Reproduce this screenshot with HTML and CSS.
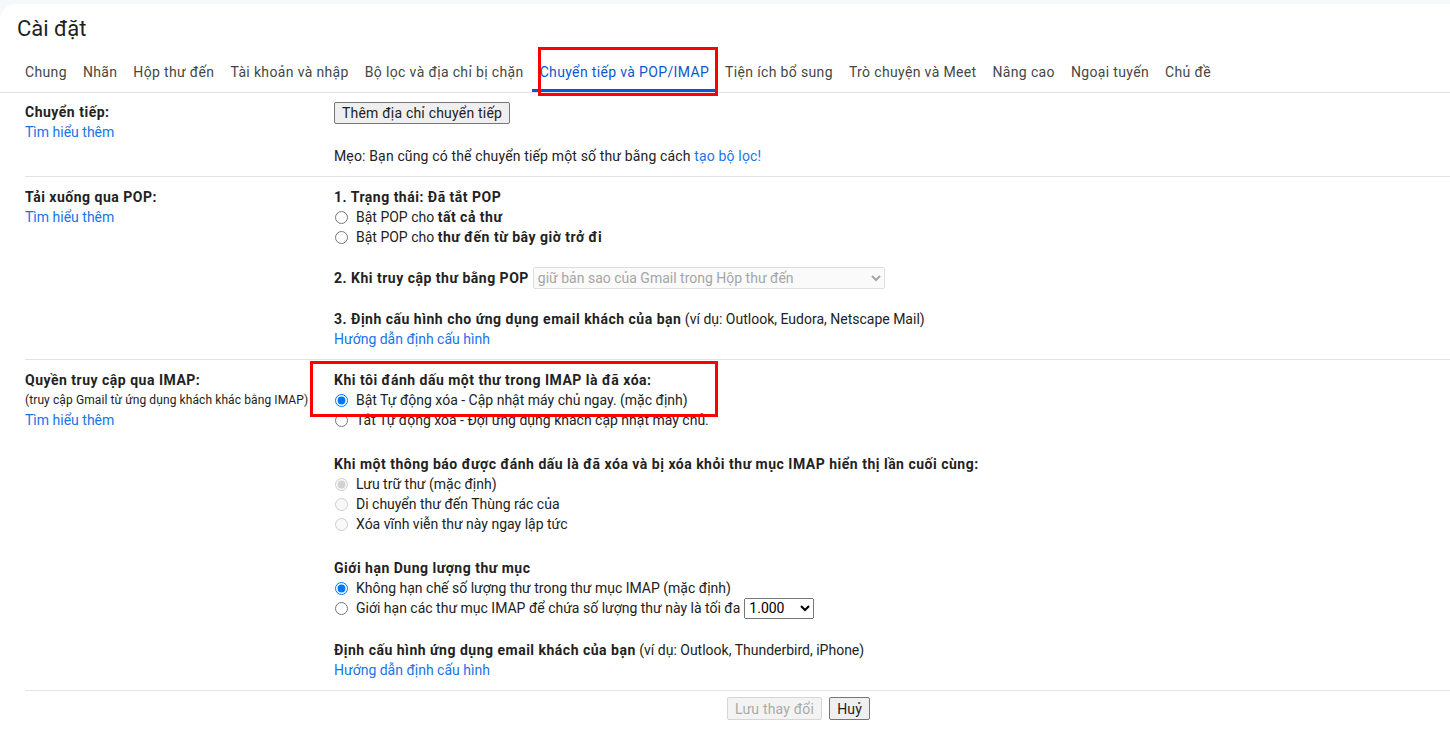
FILE: index.html
```html
<!DOCTYPE html>
<html lang="vi">
<head>
    <meta charset="UTF-8">
    <meta name="viewport" content="width=device-width, initial-scale=1.0">
    <title>Cài đặt</title>
    <link rel="stylesheet" href="styles.css">
</head>
<body>
    <div class="panel">
        <h1 class="title">Cài đặt</h1>
        <div class="tabs">
            <a class="tab">Chung</a>
            <a class="tab">Nhãn</a>
            <a class="tab">Hộp thư đến</a>
            <a class="tab">Tài khoản và nhập</a>
            <a class="tab">Bộ lọc và địa chỉ bị chặn</a>
            <a class="tab tab-active">Chuyển tiếp và POP/IMAP</a>
            <a class="tab">Tiện ích bổ sung</a>
            <a class="tab">Trò chuyện và Meet</a>
            <a class="tab">Nâng cao</a>
            <a class="tab">Ngoại tuyến</a>
            <a class="tab">Chủ đề</a>
        </div>

        <!-- Forwarding -->
        <div class="section section-fwd">
            <div class="label-col">
                <div class="label">Chuyển tiếp:</div>
                <a class="link">Tìm hiểu thêm</a>
            </div>
            <div class="value-col">
                <button class="btn">Thêm địa chỉ chuyển tiếp</button>
                <div class="tip">Mẹo: Bạn cũng có thể chuyển tiếp một số thư bằng cách <a class="link">tạo bộ lọc!</a></div>
            </div>
        </div>

        <!-- POP -->
        <div class="section section-pop">
            <div class="label-col">
                <div class="label">Tải xuống qua POP:</div>
                <a class="link">Tìm hiểu thêm</a>
            </div>
            <div class="value-col">
                <div class="group">
                    <div class="label">1. Trạng thái: Đã tắt POP</div>
                    <label class="opt"><input type="radio" name="pop">Bật POP cho&nbsp;<b>tất cả thư</b></label>
                    <label class="opt"><input type="radio" name="pop">Bật POP cho&nbsp;<b>thư đến từ bây giờ trở đi</b></label>
                </div>
                <div class="group select-row">
                    <span class="label">2. Khi truy cập thư bằng POP</span>
                    <select class="select-pop" disabled>
                        <option>giữ bản sao của Gmail trong Hộp thư đến</option>
                    </select>
                </div>
                <div class="group">
                    <div><b>3. Định cấu hình cho ứng dụng email khách của bạn</b> (ví dụ: Outlook, Eudora, Netscape Mail)</div>
                    <a class="link">Hướng dẫn định cấu hình</a>
                </div>
            </div>
        </div>

        <!-- IMAP -->
        <div class="section section-imap">
            <div class="label-col">
                <div class="label">Quyền truy cập qua IMAP:</div>
                <div class="small">(truy cập Gmail từ ứng dụng khách khác bằng IMAP)</div>
                <a class="link">Tìm hiểu thêm</a>
            </div>
            <div class="value-col">
                <div class="group">
                    <div class="label">Khi tôi đánh dấu một thư trong IMAP là đã xóa:</div>
                    <label class="opt"><input type="radio" name="expunge" checked>Bật Tự động xóa - Cập nhật máy chủ ngay. (mặc định)</label>
                    <label class="opt"><input type="radio" name="expunge">Tắt Tự động xóa - Đợi ứng dụng khách cập nhật máy chủ.</label>
                </div>
                <div class="group">
                    <div class="label">Khi một thông báo được đánh dấu là đã xóa và bị xóa khỏi thư mục IMAP hiển thị lần cuối cùng:</div>
                    <label class="opt"><input type="radio" name="deleted" checked disabled>Lưu trữ thư (mặc định)</label>
                    <label class="opt"><input type="radio" name="deleted" disabled>Di chuyển thư đến Thùng rác của</label>
                    <label class="opt"><input type="radio" name="deleted" disabled>Xóa vĩnh viễn thư này ngay lập tức</label>
                </div>
                <div class="group">
                    <div class="label">Giới hạn Dung lượng thư mục</div>
                    <label class="opt"><input type="radio" name="limit" checked>Không hạn chế số lượng thư trong thư mục IMAP (mặc định)</label>
                    <label class="opt"><input type="radio" name="limit">Giới hạn các thư mục IMAP để chứa số lượng thư này là tối đa
                        <select class="select-limit">
                            <option>1.000</option>
                            <option>2.000</option>
                            <option>5.000</option>
                            <option>10.000</option>
                        </select>
                    </label>
                </div>
                <div class="group">
                    <div><b>Định cấu hình ứng dụng email khách của bạn</b> (ví dụ: Outlook, Thunderbird, iPhone)</div>
                    <a class="link">Hướng dẫn định cấu hình</a>
                </div>
            </div>
        </div>

        <div class="footer">
            <button class="btn" disabled>Lưu thay đổi</button>
            <button class="btn">Huỷ</button>
        </div>

        <!-- annotation boxes -->
        <div class="mark mark-tab"></div>
        <div class="mark mark-imap"></div>
    </div>
</body>
</html>
```

FILE: styles.css
```css
body {
    margin: 0;
    background-color: #f6f8fc;
    font-family: Roboto, Arial, sans-serif;
    font-size: 14px;
    color: #222;
}
.panel {
    position: relative;
    margin-top: 4px;
    background-color: #fff;
    border-radius: 16px 0 0 0;
    height: 735px;
    overflow: hidden;
}
.title {
    margin: 0;
    padding: 11px 0 0 17px;
    font-size: 22px;
    font-weight: 400;
    line-height: 28px;
    color: #1f1f1f;
}
.tabs {
    display: flex;
    margin-top: 9px;
    padding-left: 17px;
    border-bottom: 1px solid #e3e3e3;
}
.tab {
    padding: 3px 8px 0;
    line-height: 34px;
    border-bottom: 3px solid transparent;
    color: #444746;
    letter-spacing: 0.35px;
    cursor: pointer;
    white-space: nowrap;
}
.tab-active {
    color: #0b57d0;
    border-bottom-color: #0b57d0;
}
.section {
    display: grid;
    grid-template-columns: 309px 1fr;
    margin-left: 25px;
    padding: 10px 0;
    line-height: 20px;
    border-bottom: 1px solid #e3e3e3;
}
.section-fwd {
    padding-top: 9px;
}
.label,
b {
    font-weight: bold;
    letter-spacing: 0.5px;
}
.link {
    color: #1a73e8;
    cursor: pointer;
    text-decoration: none;
}
.small {
    font-size: 12px;
    letter-spacing: 0.1px;
    white-space: nowrap;
}
.btn {
    font-family: Roboto, Arial, sans-serif;
    font-size: 14px;
    height: 22px;
    padding: 0 7px;
    color: #222;
    background-color: #efefef;
    border: 1px solid #767676;
    border-radius: 2px;
    letter-spacing: 0.2px;
}
.btn:disabled {
    color: #aaa;
    background-color: #f3f3f3;
    border-color: #d6d6d6;
}
.tip {
    margin-top: 22px;
    letter-spacing: 0.15px;
}
.section-pop .group + .group {
    margin-top: 20px;
}
.section-imap .group + .group {
    margin-top: 24px;
}
.section-imap .group:last-child {
    margin-top: 22px;
}
.opt {
    display: flex;
    align-items: center;
    height: 20px;
    white-space: nowrap;
}
.opt input {
    margin: 0 8px 0 1px;
    width: 13px;
    height: 13px;
}
.select-row {
    display: flex;
    align-items: center;
    height: 22px;
}
.select-pop {
    margin-left: 4px;
    width: 352px;
    height: 22px;
    font-family: Roboto, Arial, sans-serif;
    font-size: 14px;
}
.select-limit {
    margin-left: 4px;
    width: 70px;
    height: 21px;
    font-family: Roboto, Arial, sans-serif;
    font-size: 14px;
}
.footer {
    display: flex;
    gap: 7px;
    padding: 6px 0 0 727px;
}
.footer .btn {
    height: 23px;
}
.mark {
    position: absolute;
    border: 3px solid #ff0000;
    box-sizing: border-box;
}
.mark-tab {
    left: 538px;
    top: 43px;
    width: 180px;
    height: 49px;
}
.mark-imap {
    left: 310px;
    top: 357px;
    width: 408px;
    height: 56px;
}
```
